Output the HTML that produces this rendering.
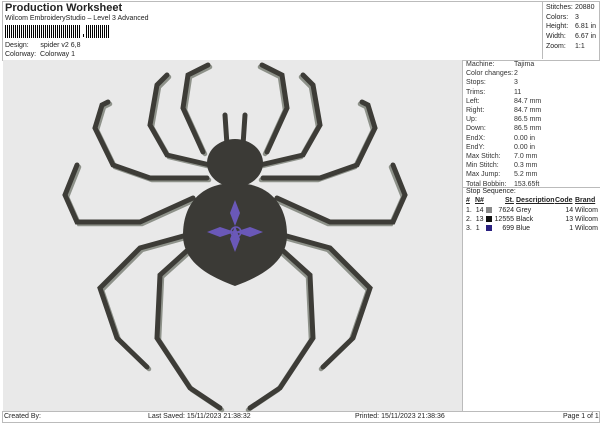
<!DOCTYPE html>
<html><head><style>
body{margin:0;width:600px;height:424px;background:#fff;font-family:"Liberation Sans",sans-serif;color:#222;position:relative;overflow:hidden}
.a{position:absolute;white-space:nowrap}
.s{font-size:7px}
</style></head><body>
<div class="a" style="left:2px;top:1px;width:596px;height:58px;border:1px solid #bbb"></div>
<div class="a" style="left:542px;top:1px;width:1px;height:58px;background:#bbb"></div>
<div class="a" style="left:5px;top:2px;font-size:11px;font-weight:bold">Production Worksheet</div>
<div class="a s" style="left:5px;top:15px">Wilcom EmbroideryStudio – Level 3 Advanced</div>
<div class="a" style="left:5px;top:25px;width:76px;height:13px;background:repeating-linear-gradient(90deg,#000 0 1px,#fff 1px 2px,#000 2px 3.2px,#fff 3.2px 4px)"></div>
<div class="a" style="left:83px;top:34px;width:1px;height:3px;background:#000"></div>
<div class="a" style="left:86px;top:25px;width:24px;height:13px;background:repeating-linear-gradient(90deg,#000 0 1px,#fff 1px 2px,#000 2px 3.2px,#fff 3.2px 4px)"></div>
<div class="a s" style="left:5px;top:42px">Design:&nbsp;&nbsp;&nbsp;&nbsp;&nbsp; spider v2 6,8</div>
<div class="a s" style="left:5px;top:51px">Colorway:&nbsp; Colorway 1</div>
<div class="a s" style="left:546px;top:3px;line-height:9.7px">Stitches:<br>Colors:<br>Height:<br>Width:<br>Zoom:</div>
<div class="a s" style="left:575px;top:3px;line-height:9.7px">20880<br>3<br>6.81 in<br>6.67 in<br>1:1</div>
<div class="a" style="left:3px;top:60px;width:459px;height:351px;background:#e9e9e9"></div>
<div class="a" style="left:462px;top:60px;width:1px;height:351px;background:#bbb"></div>
<div class="a s" style="left:466px;top:60px;line-height:9.2px;color:#333">Machine:<br>Color changes:<br>Stops:<br>Trims:<br>Left:<br>Right:<br>Up:<br>Down:<br>EndX:<br>EndY:<br>Max Stitch:<br>Min Stitch:<br>Max Jump:<br>Total Bobbin:</div>
<div class="a s" style="left:514px;top:60px;line-height:9.2px;color:#333">Tajima<br>2<br>3<br>11<br>84.7 mm<br>84.7 mm<br>86.5 mm<br>86.5 mm<br>0.00 in<br>0.00 in<br>7.0 mm<br>0.3 mm<br>5.2 mm<br>153.65ft</div>
<div class="a" style="left:463px;top:187px;width:137px;height:1px;background:#bbb"></div>
<div class="a s" style="left:466px;top:188px">Stop Sequence:</div>
<div class="a s" style="left:466px;top:197px;font-weight:bold;text-decoration:underline">#</div>
<div class="a s" style="left:475px;top:197px;font-weight:bold;text-decoration:underline">N#</div>
<div class="a s" style="left:505px;top:197px;font-weight:bold;text-decoration:underline">St.</div>
<div class="a s" style="left:516px;top:197px;font-weight:bold;text-decoration:underline">Description</div>
<div class="a s" style="left:555px;top:197px;font-weight:bold;text-decoration:underline">Code</div>
<div class="a s" style="left:575px;top:197px;font-weight:bold;text-decoration:underline">Brand</div>
<div class="a s" style="left:466px;top:206px;line-height:9.2px">1.&nbsp; 14<br>2.&nbsp; 13<br>3.&nbsp; 1</div>
<div class="a" style="left:486px;top:207px;width:6px;height:6px;background:#888"></div>
<div class="a" style="left:486px;top:216px;width:6px;height:6px;background:#111"></div>
<div class="a" style="left:486px;top:225px;width:6px;height:6px;background:#2a2080"></div>
<div class="a s" style="left:493px;top:206px;line-height:9.2px;text-align:right;width:21px">7624<br>12555<br>699</div>
<div class="a s" style="left:516px;top:206px;line-height:9.2px">Grey<br>Black<br>Blue</div>
<div class="a s" style="left:560px;top:206px;line-height:9.2px;text-align:right;width:38px">14 Wilcom<br>13 Wilcom<br>1 Wilcom</div>
<div class="a" style="left:2px;top:411px;width:596px;height:10px;border:1px solid #bbb"></div>
<div class="a s" style="left:4px;top:413px">Created By:</div>
<div class="a s" style="left:148px;top:413px">Last Saved: 15/11/2023 21:38:32</div>
<div class="a s" style="left:355px;top:413px">Printed: 15/11/2023 21:38:36</div>
<div class="a s" style="left:563px;top:413px">Page 1 of 1</div>
<svg class="a" style="left:0;top:0" width="600" height="424">
<defs><g id="legs" fill="none" stroke-linejoin="miter" stroke-linecap="round">
<g stroke="#8e928a" stroke-width="4.5" transform="translate(2,2)">
<polyline points="203,152 183,108 188,75 208,65"/>
<polyline points="210,165 167,155 150,125 157,85 167,75"/>
<polyline points="207,178 150,178 113,165 95,128 102,105 108,102"/>
<polyline points="193,198 140,222 77,222 65,195 77,165"/>
<polyline points="187,235 140,248 100,288 117,338 147,367"/>
<polyline points="190,248 160,275 157,338 190,388 220,408"/>
</g>
<g stroke="#3d3c37" stroke-width="5">
<polyline points="203,152 183,108 188,75 208,65"/>
<polyline points="210,165 167,155 150,125 157,85 167,75"/>
<polyline points="207,178 150,178 113,165 95,128 102,105 108,102"/>
<polyline points="193,198 140,222 77,222 65,195 77,165"/>
<polyline points="187,235 140,248 100,288 117,338 147,367"/>
<polyline points="190,248 160,275 157,338 190,388 220,408"/>
</g></g></defs>
<use href="#legs"/>
<use href="#legs" transform="translate(470,0) scale(-1,1)"/>
<g stroke="#3d3c37" stroke-width="5" stroke-linecap="round"><line x1="227" y1="145" x2="225" y2="115"/><line x1="243" y1="145" x2="245" y2="115"/></g>
<ellipse cx="235" cy="163" rx="28" ry="24" fill="#3b3a36"/>
<path d="M235,183 C200,183 183,205 183,235 C183,262 208,276 235,286 C262,276 287,262 287,235 C287,205 270,183 235,183Z" fill="#3b3a36"/>
<g fill="#6a58b8">
<path d="M235,200 L240,213 L235,226 L230,213Z"/><path d="M235,252 L240,239 L235,226 L230,239Z"/>
<path d="M207,232 L220,227 L235,232 L220,237Z"/><path d="M263,232 L250,227 L235,232 L250,237Z"/>
</g>
<circle cx="236" cy="232" r="5" fill="none" stroke="#6a58b8" stroke-width="1.5"/>
</svg>
</body></html>
